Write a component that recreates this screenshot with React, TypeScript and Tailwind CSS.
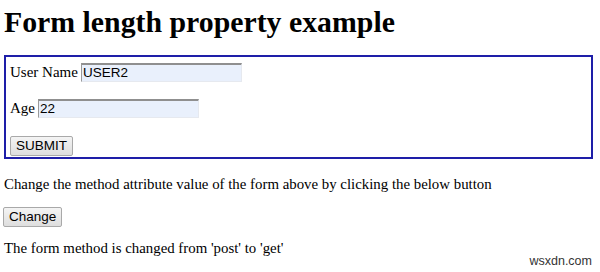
export default function App() {
  const serif = { fontFamily: '"Liberation Serif", "Times New Roman", serif' };
  return (
    <div className="relative h-[272px] w-[600px] overflow-hidden bg-white text-black" style={serif}>
      <div className="px-[4px]">
        <h1 className="pt-[5px] text-[29.8px] leading-[34px] font-bold">Form length property example</h1>

        <form className="mt-[16px] h-[104px] w-[589px] border-2 border-[#1e1ea8] px-[4px] pt-[5px] text-[15px]">
          <div className="flex h-[20px] items-center">
            <label className="mr-[3px]">User Name</label>
            <Field value="USER2" />
          </div>
          <div className="mt-[16px] flex h-[20px] items-center">
            <label className="mr-[3px]">Age</label>
            <Field value="22" />
          </div>
          <div className="mt-[16px]">
            <Btn label="SUBMIT" />
          </div>
        </form>

        <p className="mt-[16px] text-[14.85px] leading-[18px]">
          Change the method attribute value of the form above by clicking the below button
        </p>
        <div className="mt-[11px] -ml-[1px]">
          <Btn label="Change" />
        </div>
        <p className="mt-[11px] text-[14.85px] leading-[18px]">The form method is changed from 'post' to 'get'</p>
      </div>
      <span
        className="absolute right-[8px] bottom-[4px] text-[12.5px] leading-[14px] text-[#333]"
        style={{ fontFamily: '"Liberation Sans", Arial, sans-serif' }}
      >
        wsxdn.com
      </span>
    </div>
  );
}

function Field({ value }: { value: string }) {
  return (
    <input
      readOnly
      value={value}
      className="h-[19px] w-[161px] border-t-2 border-l border-r border-b border-t-[#8f8f8f] border-l-[#9a9a9a] border-r-[#e6e9ef] border-b-[#e6e9ef] bg-[#e9f0fc] px-[1px] text-[13.5px] leading-[16px] outline-none"
      style={{ fontFamily: '"Liberation Sans", Arial, sans-serif' }}
    />
  );
}

function Btn({ label }: { label: string }) {
  return (
    <button
      type="button"
      className="h-[20px] rounded-[2px] border border-[#a9a9a9] bg-gradient-to-b from-[#f4f4f4] to-[#dedede] px-[5px] text-[13.5px] leading-[16px] text-black"
      style={{ fontFamily: '"Liberation Sans", Arial, sans-serif' }}
    >
      {label}
    </button>
  );
}
